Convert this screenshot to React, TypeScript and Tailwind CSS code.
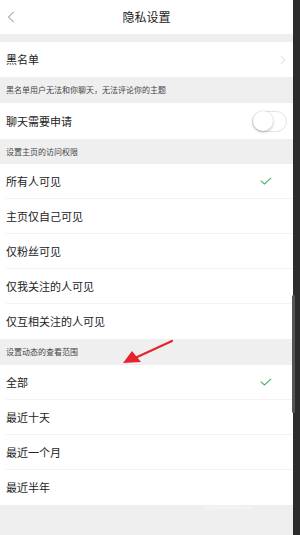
import { ChevronLeft, ChevronRight } from "lucide-react";

const homeOptions = ["所有人可见", "主页仅自己可见", "仅粉丝可见", "仅我关注的人可见", "仅互相关注的人可见"];
const feedOptions = ["全部", "最近十天", "最近一个月", "最近半年"];

function Check() {
  return (
    <svg width="12" height="8" viewBox="0 0 12 8" fill="none">
      <path d="M0.8 3.6 L4.4 7 L11.2 0.8" stroke="#4caf6a" strokeWidth="1.1" />
    </svg>
  );
}

function OptionRow({ label, checked, last }: { label: string; checked?: boolean; last?: boolean }) {
  return (
    <div className="flex h-[35px] items-center bg-white pl-[6px]">
      <div className={`flex h-full flex-1 items-center pr-[21px] ${last ? "" : "border-b border-[#f3f3f3]"}`}>
        <span className="flex-1 text-[11px] text-[#222]">{label}</span>
        {checked && <Check />}
      </div>
    </div>
  );
}

function SectionHead({ text, h }: { text: string; h: string }) {
  return (
    <div className={`flex items-center bg-[#efefef] pl-[6px] text-[8px] text-[#444] ${h}`}>{text}</div>
  );
}

export default function App() {
  return (
    <div
      className="relative flex h-[535px] w-[300px] overflow-hidden bg-[#2c2c2c]"
      style={{ fontFamily: '"Noto Sans CJK SC", "Noto Sans", sans-serif' }}
    >
      <div className="flex w-[293px] flex-col bg-[#efefef]">
        <div className="relative flex h-[34px] items-center justify-center bg-white">
          <ChevronLeft className="absolute left-[1px] top-[7px] text-[#777]" size={20} strokeWidth={1.1} />
          <span className="text-[12px] text-[#222]">隐私设置</span>
        </div>
        <div className="h-[8px]" />
        <div className="flex h-[35px] items-center bg-white pl-[6px] pr-[3px]">
          <span className="flex-1 text-[11px] text-[#222]">黑名单</span>
          <ChevronRight className="text-[#bbb]" size={14} strokeWidth={1.1} />
        </div>
        <SectionHead text="黑名单用户无法和你聊天，无法评论你的主题" h="h-[26px]" />
        <div className="flex h-[36px] items-center bg-white pl-[6px] pr-[6px]">
          <span className="flex-1 text-[11px] text-[#222]">聊天需要申请</span>
          <div className="flex h-[21px] w-[35px] items-center rounded-full border border-[#e3e3e3] bg-white">
            <div className="h-[20px] w-[20px] rounded-full bg-white shadow-[0_1px_3px_rgba(0,0,0,0.3)]" />
          </div>
        </div>
        <SectionHead text="设置主页的访问权限" h="h-[25px]" />
        {homeOptions.map((o, i) => (
          <OptionRow key={o} label={o} checked={i === 0} last={i === homeOptions.length - 1} />
        ))}
        <SectionHead text="设置动态的查看范围" h="h-[26px]" />
        {feedOptions.map((o, i) => (
          <OptionRow key={o} label={o} checked={i === 0} last={i === feedOptions.length - 1} />
        ))}
        <div className="relative flex-1">
          <div className="absolute left-[195px] top-[-18px] flex flex-col items-center text-white/70">
            <span className="text-[14px] font-bold leading-none tracking-wide" style={{ fontFamily: '"Liberation Sans", sans-serif' }}>
              Bai<span className="text-[9px]">du</span> 经验
            </span>
            <span className="mt-[3px] text-[6px] leading-none text-white/60" style={{ fontFamily: '"Liberation Sans", sans-serif' }}>
              jingyan.baidu.com
            </span>
          </div>
        </div>
      </div>
      <div className="relative flex-1">
        <div className="absolute left-[-1px] top-[295px] h-[118px] w-[3px] rounded-sm bg-[#555]" />
      </div>
      <svg className="absolute left-[118px] top-[336px]" width="62" height="32" viewBox="0 0 62 32">
        <path d="M54 5 L17 22" stroke="#e3262c" strokeWidth="2.2" strokeLinecap="round" />
        <path d="M5 27 L14 15 L23 26 Z" fill="#e3262c" />
      </svg>
    </div>
  );
}
